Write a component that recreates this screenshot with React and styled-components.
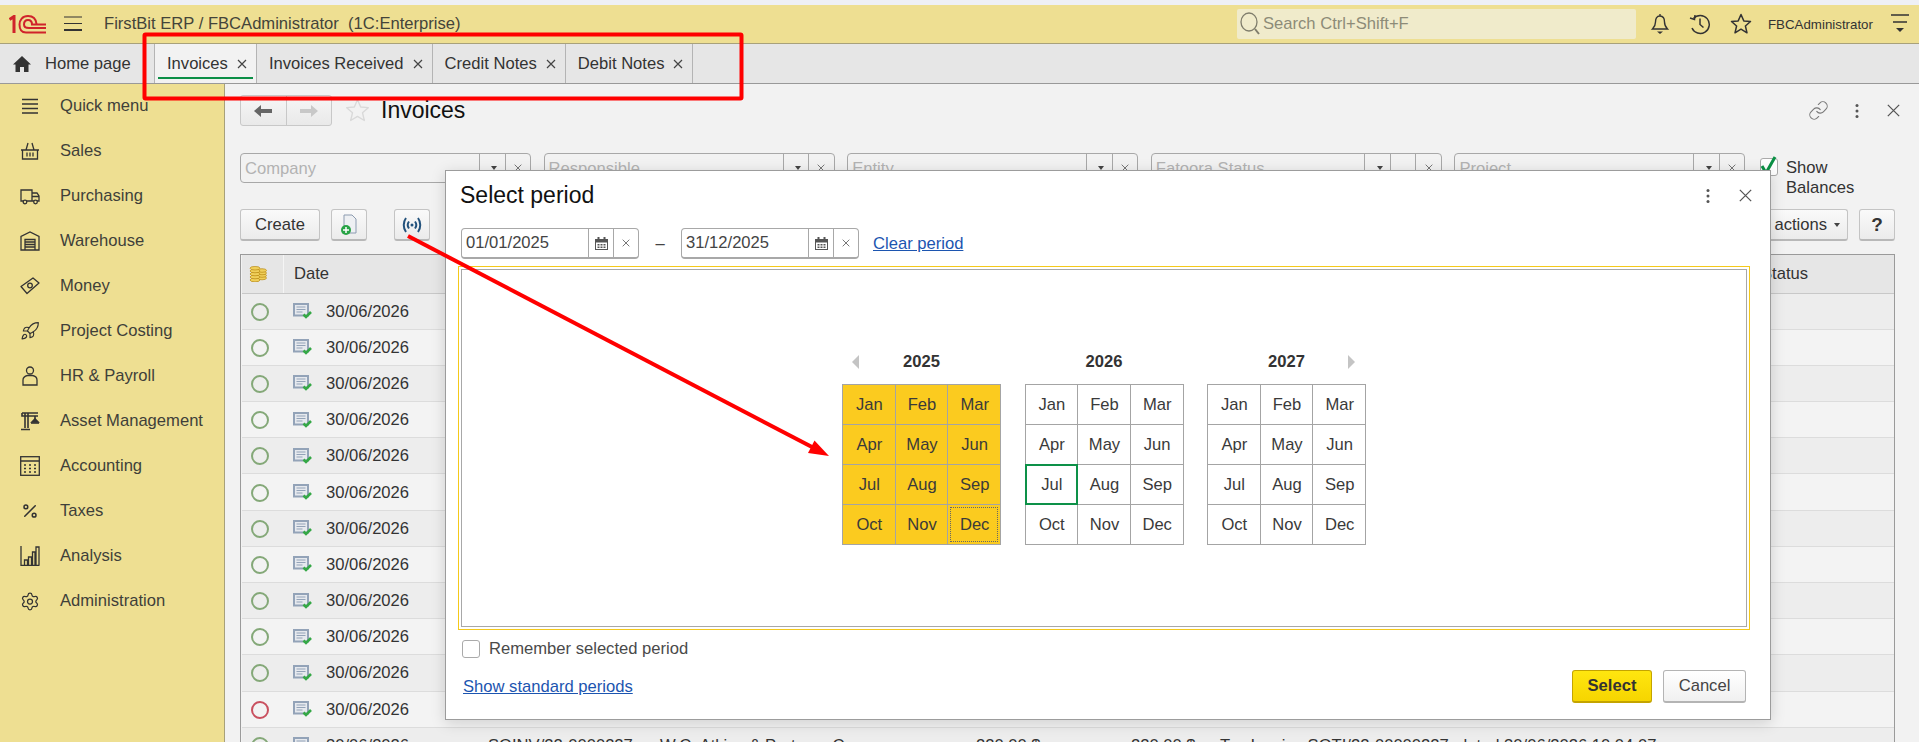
import React from "react";
import styled, { createGlobalStyle } from "styled-components";
import { Rocket, Settings, Percent, Link as ChainLink } from "lucide-react";

const MONTHS = ["Jan", "Feb", "Mar", "Apr", "May", "Jun", "Jul", "Aug", "Sep", "Oct", "Nov", "Dec"];
const ROWS = Array.from({ length: 13 }, (_, i) => i);

function Line({ size = 12, color = "#555", weight = 1.2 }) {
  return (
    <svg width={size} height={size} viewBox="0 0 12 12" fill="none" stroke={color} strokeWidth={weight}>
      <path d="M2 2l8 8M10 2l-8 8" />
    </svg>
  );
}

function Dots() {
  return (
    <svg width="4" height="16" viewBox="0 0 4 16" fill="#555">
      <rect x="0.5" y="1" width="3" height="3" rx="1.5" />
      <rect x="0.5" y="6.5" width="3" height="3" rx="1.5" />
      <rect x="0.5" y="12" width="3" height="3" rx="1.5" />
    </svg>
  );
}

function Logo() {
  return (
    <svg width="38" height="19" viewBox="0 0 38 19" fill="none" stroke="#d0232b" strokeWidth="2">
      <path d="M0.5 4.5L5 1.5V18" strokeWidth="3" />
      <path d="M37 17.5H17C12.5 17.5 10.5 14 10.5 9.5S13.5 1 19 1S27 4 27.5 9" />
      <path d="M37 13H20C17 13 15 12 15 9.5S16.500 5 19 5S23 7 23 9.500H37" />
    </svg>
  );
}

function Menu({ arrow }) {
  return (
    <svg width="20" height="24" viewBox="0 0 20 24" fill="none" stroke="#333" strokeWidth="1.4">
      <path d="M1 3h18M3 10h14" />
      {arrow ? <path d="M6 16h8l-4 4z" fill="#333" stroke="none" /> : null}
    </svg>
  );
}

function Burger() {
  return (
    <svg width="18" height="16" viewBox="0 0 18 16" fill="none" stroke="#333">
      <path d="M0 1h18M0 7.500h18" strokeWidth="1.2" />
      <path d="M0 14h18" strokeWidth="2" />
    </svg>
  );
}

function Bell() {
  return (
    <svg width="20" height="22" viewBox="0 0 20 22" fill="none" stroke="#333" strokeWidth="1.4">
      <path d="M10 1v2M10 3c-3.500 0-4.500 3-4.500 6 0 4-1.500 5.500-3 7h15c-1.500-1.500-3-3-3-7 0-3-1-6-4.500-6z" />
      <path d="M7 18.500h6L10 21z" fill="#333" stroke="none" />
    </svg>
  );
}

function History() {
  return (
    <svg width="22" height="22" viewBox="0 0 22 22" fill="none" stroke="#333" strokeWidth="1.5">
      <path d="M4.500 5.500A9 9 0 1 1 3 15" />
      <path d="M1 5l4.500 1.500L6 2" />
      <path d="M11 5.500V11.500l3.500 3" />
    </svg>
  );
}

function Star({ size = 22, color = "#333", width = 1.5 }) {
  return (
    <svg width={size} height={size} viewBox="0 0 22 22" fill="none" stroke={color} strokeWidth={width}>
      <path d="M11 1.500l2.800 6.400 6.700.6-5.100 4.500 1.600 6.800L11 16.200l-6 3.600 1.600-6.800L1.500 8.500l6.700-.6z" strokeLinejoin="round" />
    </svg>
  );
}

function Magnifier() {
  return (
    <svg width="22" height="26" viewBox="0 0 22 26" fill="none" stroke="#7f7d6c" strokeWidth="1.3">
      <ellipse cx="10" cy="11" rx="8" ry="9" />
      <path d="M16 18l4 5" strokeWidth="2" />
    </svg>
  );
}

function Home() {
  return (
    <svg width="18" height="16" viewBox="0 0 18 16" fill="#333">
      <path d="M9 0L18 8.500h-2.500V16H11v-5H7v5H2.500V8.500H0z" />
    </svg>
  );
}

const sideIcon = { width: 20, height: 20, viewBox: "0 0 20 20", fill: "none", stroke: "#333", strokeWidth: 1.3 };

function SideIcon({ name }) {
  switch (name) {
    case "menu":
      return (
        <svg {...sideIcon}>
          <path d="M2 3.500h16M2 8h16M2 12.500h16M2 17h16" />
        </svg>
      );
    case "basket":
      return (
        <svg {...sideIcon}>
          <path d="M1 9h18M2.500 9v9h15V9M6 9l2-7M14 9l-2-7M7 11.500v4M10 11.500v4M13 11.500v4" />
        </svg>
      );
    case "truck":
      return (
        <svg {...sideIcon}>
          <path d="M3 15H1V4h11v11H7M12 7h5l2 3v5h-2M12 15h2M12 10.500h7" />
          <circle cx="5" cy="16" r="1.800" />
          <circle cx="15.500" cy="16" r="1.800" />
        </svg>
      );
    case "warehouse":
      return (
        <svg {...sideIcon}>
          <path d="M1 19V5.500L10 1l9 4.500V19zM5 19V8.500h10V19M5 11h10M5 13.500h10M5 16h10" />
        </svg>
      );
    case "money":
      return (
        <svg {...sideIcon}>
          <path d="M1 10.500L13 2l6 5-12 10.500z" strokeLinejoin="round" />
          <circle cx="10" cy="9.500" r="2.300" />
        </svg>
      );
    case "rocket":
      return <Rocket size={20} color="#333" strokeWidth={1.4} />;
    case "person":
      return (
        <svg {...sideIcon}>
          <circle cx="10" cy="4.500" r="3.500" />
          <path d="M3 19v-5c0-3 2.500-4 4.500-4.500h5C15 10 17 11 17 14v5z" />
        </svg>
      );
    case "crane":
      return (
        <svg {...sideIcon} strokeWidth={1.6}>
          <path d="M2 2h16M5 2v15M8 2v15M1 18.500h9M2 2v3h16M15 5v3" />
          <path d="M12 11l3-3 3 3z" fill="#333" />
          <path d="M11 12h8" />
        </svg>
      );
    case "calc":
      return (
        <svg {...sideIcon}>
          <rect x="0.700" y="0.700" width="18.600" height="18.600" />
          <path d="M1 5h18" strokeWidth="1.500" />
          <path d="M4 9h2M9 9h2M14 9h2M4 12.500h2M9 12.500h2M14 12.500h2M4 16h2M9 16h2M14 16h2" strokeWidth="1.500" />
        </svg>
      );
    case "percent":
      return <Percent size={18} color="#333" strokeWidth={2} />;
    case "bars":
      return (
        <svg {...sideIcon}>
          <path d="M1 0v19.500h18.500M4.500 19v-5h3v5M8.500 19v-8h3v8M12.500 19V6h2.500v13M16 19V1h3v18" />
        </svg>
      );
    default:
      return <Settings size={21} color="#333" strokeWidth={1.5} />;
  }
}

function Coins() {
  return (
    <svg width="18" height="16" viewBox="0 0 18 16" fill="#f0cf5a" stroke="#b98a12" strokeWidth="0.7">
      <ellipse cx="13" cy="12" rx="4.500" ry="1.800" />
      <ellipse cx="13" cy="9.500" rx="4.500" ry="1.800" />
      <ellipse cx="13" cy="7" rx="4.500" ry="1.800" />
      <ellipse cx="13" cy="4.500" rx="4.500" ry="1.800" />
      <ellipse cx="6" cy="14" rx="5" ry="1.800" />
      <ellipse cx="6" cy="11" rx="5" ry="1.800" />
      <ellipse cx="6" cy="8" rx="5" ry="1.800" />
      <ellipse cx="6" cy="5" rx="5" ry="1.800" />
      <ellipse cx="6" cy="2.200" rx="5" ry="1.800" />
    </svg>
  );
}

function DocIcon() {
  return (
    <svg width="20" height="17" viewBox="0 0 20 17" fill="none">
      <rect x="1" y="1" width="14" height="11.500" fill="#e6e9ee" stroke="#93a3b8" strokeWidth="2" />
      <path d="M3.500 4h9M3.500 6.500h9M3.500 9h6" stroke="#93a3b8" />
      <path d="M10.500 11.500l2.500 2.500 5-5" stroke="#35a846" strokeWidth="2.600" />
    </svg>
  );
}

function ToolFileIcon() {
  return (
    <svg width="18" height="22" viewBox="0 0 18 22" fill="none">
      <path d="M4 1h8l4 4v14H4z" fill="#eef0f3" stroke="#8c9bb0" />
      <circle cx="6" cy="16" r="5" fill="#27a345" />
      <path d="M6 13v6M3 16h6" stroke="#fff" strokeWidth="1.500" />
    </svg>
  );
}

function SignalIcon() {
  return (
    <svg width="22" height="18" viewBox="0 0 22 18" fill="none" stroke="#23527c" strokeWidth="2">
      <path d="M5 2C2 6 2 12 5 16M17 2c3 4 3 10 0 14M8 5.500c-1.500 2-1.500 5 0 7M14 5.500c1.500 2 1.500 5 0 7" />
      <circle cx="11" cy="9" r="1.500" fill="#23527c" stroke="none" />
    </svg>
  );
}

function CalIcon() {
  return (
    <svg width="13" height="13" viewBox="0 0 13 13" fill="#555">
      <path d="M0 2h13v11H0zM1 5.500V12h11V5.500z" fillRule="evenodd" />
      <rect x="2.500" y="0" width="2" height="3" />
      <rect x="8.500" y="0" width="2" height="3" />
      <path d="M2.500 7h2v1.500h-2zM5.500 7h2v1.500h-2zM8.500 7h2v1.500h-2zM2.500 9.500h2V11h-2zM5.500 9.500h2V11h-2zM8.500 9.500h2V11h-2z" />
    </svg>
  );
}

function Annotations() {
  return (
    <Overlay width="1919" height="742" viewBox="0 0 1919 742" fill="none">
      <rect x="144.500" y="34.500" width="597" height="64" stroke="#f00" strokeWidth="4" rx="1" />
      <path d="M408 236L812 447" stroke="#f00" strokeWidth="4" />
      <path d="M829 456L808 453L814.500 440.500z" fill="#f00" />
    </Overlay>
  );
}

function Filter({ label, extra }) {
  return (
    <FilterBox>
      <FilterText>{label}</FilterText>
      <FilterCell>
        <DropGlyph />
      </FilterCell>
      {extra ? <FilterCell /> : null}
      <FilterCell>
        <Line size={10} color="#777" />
      </FilterCell>
    </FilterBox>
  );
}

function Year({ year, selected, current, prev, next }) {
  return (
    <YearColumn>
      <YearHead>
        <span>{prev ? <Triangle $dir="left" /> : null}</span>
        <YearLabel>{year}</YearLabel>
        <YearEnd>{next ? <Triangle $dir="right" /> : null}</YearEnd>
      </YearHead>
      <MonthGrid>
        {MONTHS.map((m) => (
          <Month key={m} $selected={selected} $current={current && m === "Jul"} $focused={selected && m === "Dec"}>
            {m}
          </Month>
        ))}
      </MonthGrid>
    </YearColumn>
  );
}

function DateField({ value }) {
  return (
    <DateBox>
      <DateText>{value}</DateText>
      <DateCell>
        <CalIcon />
      </DateCell>
      <DateCell>
        <Line size={10} color="#777" />
      </DateCell>
    </DateBox>
  );
}

const SIDE = [
  ["menu", "Quick menu"],
  ["basket", "Sales"],
  ["truck", "Purchasing"],
  ["warehouse", "Warehouse"],
  ["money", "Money"],
  ["rocket", "Project Costing"],
  ["person", "HR & Payroll"],
  ["crane", "Asset Management"],
  ["calc", "Accounting"],
  ["percent", "Taxes"],
  ["bars", "Analysis"],
  ["gear", "Administration"],
];

const TABS = ["Invoices", "Invoices Received", "Credit Notes", "Debit Notes"];

export default function App() {
  return (
    <Page>
      <GlobalStyle />
      <TopStrip />
      <Header>
        <LogoWrap>
          <Logo />
        </LogoWrap>
        <BurgerWrap>
          <Burger />
        </BurgerWrap>
        <AppTitle>FirstBit ERP / FBCAdministrator  (1C:Enterprise)</AppTitle>
        <Search>
          <Magnifier />
          <span>Search Ctrl+Shift+F</span>
        </Search>
        <HeaderIcons>
          <Bell />
          <History />
          <Star />
        </HeaderIcons>
        <UserName>FBCAdministrator</UserName>
        <Menu arrow />
      </Header>
      <TabBar>
        <HomeTab>
          <Home />
          Home page
        </HomeTab>
        {TABS.map((t, i) => (
          <Tab key={t} $active={i === 0}>
            {t}
            <Line size={12} color="#444" />
          </Tab>
        ))}
      </TabBar>
      <Main>
        <Sidebar>
          {SIDE.map(([icon, label]) => (
            <SideItem key={label}>
              <SideIconBox>
                <SideIcon name={icon} />
              </SideIconBox>
              {label}
            </SideItem>
          ))}
        </Sidebar>
        <Content>
          <TitleRow>
            <NavGroup>
              <NavButton>
                <NavArrow viewBox="0 0 18 12" fill="#666">
                  <path d="M0 6l7-6v4h11v4H7v4z" />
                </NavArrow>
              </NavButton>
              <NavButton>
                <NavArrow viewBox="0 0 18 12" fill="#c8c8c8">
                  <path d="M18 6l-7-6v4H0v4h11v4z" />
                </NavArrow>
              </NavButton>
            </NavGroup>
            <Star size={25} color="#d9d9d9" width={1.2} />
            <PageTitle>Invoices</PageTitle>
            <TitleActions>
              <ChainLink size={21} color="#777" strokeWidth={1.2} />
              <Dots />
              <Line size={17} color="#555" weight={0.9} />
            </TitleActions>
          </TitleRow>
          <FilterRow>
            <Filter label="Company" />
            <Filter label="Responsible" />
            <Filter label="Entity" />
            <Filter label="Fatoora Status" extra />
            <Filter label="Project" />
            <BalanceCheck>
              <CheckBox>
                <svg width="20" height="22" viewBox="0 0 20 22" fill="none" stroke="#0c9146" strokeWidth="3">
                  <path d="M3 11l4 7L16 2" />
                </svg>
              </CheckBox>
              <BalanceLabel>
                Show
                <br />
                Balances
              </BalanceLabel>
            </BalanceCheck>
          </FilterRow>
          <Toolbar>
            <ToolButton $wide>Create</ToolButton>
            <ToolButton>
              <ToolFileIcon />
            </ToolButton>
            <ToolButton $apart>
              <SignalIcon />
            </ToolButton>
            <ToolSpacer />
            <ToolButton $wide>
              More actions
              <DropGlyph />
            </ToolButton>
            <ToolButton>
              <HelpMark>?</HelpMark>
            </ToolButton>
          </Toolbar>
          <Table>
            <HeadRow>
              <HeadCell>
                <Coins />
              </HeadCell>
              <HeadCell $first>Date</HeadCell>
              <HeadCell />
              <HeadCell />
              <HeadCell />
              <HeadCell $last>Status</HeadCell>
            </HeadRow>
            {ROWS.map((i) => (
              <Row key={i}>
                <Cell>
                  <StatusDot $red={i === 11} />
                </Cell>
                <Cell>
                  <DocIcon />
                </Cell>
                <Cell>30/06/2026</Cell>
                {i === 12 ? (
                  <>
                    <Cell>SOINV/22-0000227</Cell>
                    <Cell>W.C. Atkins &amp; Partners Co</Cell>
                    <Cell>220.00 $</Cell>
                    <Cell>220.00 $</Cell>
                    <Cell>Tax Invoice SOTI/22-00000227, dated 30/06/2026 10:04:07</Cell>
                  </>
                ) : null}
              </Row>
            ))}
          </Table>
        </Content>
      </Main>
      <Modal>
        <ModalHead>
          <ModalTitle>Select period</ModalTitle>
          <ModalActions>
            <Dots />
            <Line size={17} color="#555" weight={0.9} />
          </ModalActions>
        </ModalHead>
        <DateRow>
          <DateField value="01/01/2025" />
          <Dash>–</Dash>
          <DateField value="31/12/2025" />
          <ClearLink>Clear period</ClearLink>
        </DateRow>
        <CalendarFrame>
          <Calendar>
            <Year year="2025" selected prev />
            <Year year="2026" current />
            <Year year="2027" next />
          </Calendar>
        </CalendarFrame>
        <RememberRow>
          <CheckBox />
          Remember selected period
        </RememberRow>
        <ModalFoot>
          <ModalLink>Show standard periods</ModalLink>
          <FootButtons>
            <PrimaryButton>Select</PrimaryButton>
            <CancelButton>Cancel</CancelButton>
          </FootButtons>
        </ModalFoot>
      </Modal>
      <Annotations />
    </Page>
  );
}

const GlobalStyle = createGlobalStyle`
  html, body {
    margin: 0;
    padding: 0;
    overflow: hidden;
    background: #f2f2f2;
  }
  * {
    box-sizing: border-box;
  }
`;

const Page = styled.div`
  position: relative;
  width: 1919px;
  height: 742px;
  overflow: hidden;
  display: flex;
  flex-direction: column;
  font-family: "Liberation Sans", Arial, sans-serif;
  font-size: 16.6px;
  color: #333;
`;

const Overlay = styled.svg`
  position: absolute;
  left: 0;
  top: 0;
  pointer-events: none;
`;

const TopStrip = styled.div`
  height: 5px;
  background: #eef0f6;
`;

const Header = styled.header`
  height: 39px;
  flex: none;
  display: flex;
  align-items: center;
  padding-right: 9px;
  background: #eedf92;
  border-bottom: 1px solid #a8a17a;
`;

const LogoWrap = styled.div`
  width: 64px;
  padding-left: 9px;
  display: flex;
`;

const BurgerWrap = styled.div`
  width: 40px;
  display: flex;
`;

const AppTitle = styled.div`
  flex: 1;
  white-space: pre;
  font-size: 16.6px;
  color: #44443a;
`;

const Search = styled.div`
  width: 399px;
  height: 30px;
  display: flex;
  align-items: center;
  gap: 2px;
  padding-left: 2px;
  border-radius: 2px;
  background: #f0ebcb;
  color: #8d8b78;
`;

const HeaderIcons = styled.div`
  width: 132px;
  padding-left: 14px;
  display: flex;
  align-items: center;
  gap: 19px;
`;

const UserName = styled.div`
  width: 122px;
  font-size: 13.3px;
  color: #333;
`;

const TabBar = styled.nav`
  height: 40px;
  flex: none;
  display: flex;
  background: #e6e6e6;
  border-bottom: 1px solid #999;
`;

const HomeTab = styled.div`
  width: 155px;
  display: flex;
  align-items: center;
  gap: 14px;
  padding-left: 13px;
  border-right: 1px solid #b4b4b4;
`;

const Tab = styled.div`
  position: relative;
  display: flex;
  align-items: center;
  gap: 8px;
  padding: 0 8px 0 12px;
  border-right: 1px solid #b4b4b4;
  background: ${(p) => (p.$active ? "#f2f2f2" : "#e6e6e6")};

  &::after {
    content: "";
    display: ${(p) => (p.$active ? "block" : "none")};
    position: absolute;
    left: 3px;
    right: 3px;
    bottom: 4px;
    height: 2px;
    background: #0c8f47;
  }
`;

const Main = styled.div`
  flex: 1;
  display: flex;
  min-height: 0;
`;

const Sidebar = styled.aside`
  width: 225px;
  flex: none;
  background: #eedf92;
  border-right: 1px solid #a8a17a;
`;

const SideItem = styled.div`
  height: 45px;
  display: flex;
  align-items: center;
  gap: 20px;
  padding: 0 0 1px 20px;
  color: #3f3f3a;
`;

const SideIconBox = styled.span`
  width: 20px;
  height: 20px;
  display: flex;
  align-items: center;
  justify-content: center;
`;

const Content = styled.main`
  flex: 1;
  min-width: 0;
  padding: 11px 24px 0 15px;
  background: #f2f2f2;
`;

const TitleRow = styled.div`
  height: 31px;
  display: flex;
  align-items: center;
`;

const NavGroup = styled.div`
  width: 92px;
  height: 31px;
  display: flex;
  margin-right: 13px;
  border: 1px solid #c8c8c8;
  border-radius: 3px;
  background: linear-gradient(#f6f6f6, #e9e9e9);
`;

const NavButton = styled.div`
  flex: 1;
  display: flex;
  align-items: center;
  justify-content: center;

  & + & {
    border-left: 1px solid #c8c8c8;
  }
`;

const NavArrow = styled.svg`
  width: 18px;
  height: 12px;
`;

const PageTitle = styled.h1`
  margin: 0 0 0 11px;
  font-size: 23px;
  font-weight: 400;
  color: #111;
`;

const TitleActions = styled.div`
  margin: 0 -7px 0 auto;
  display: flex;
  align-items: center;
  gap: 26px;
`;

const FilterRow = styled.div`
  display: flex;
  gap: 12.6px;
  margin-top: 27px;
  height: 30px;
`;

const FilterBox = styled.div`
  width: 291px;
  height: 30px;
  flex: none;
  display: flex;
  border: 1px solid #a8a8a8;
  border-radius: 4px;
  color: #b3b3b3;
  background: #f2f2f2;
`;

const FilterText = styled.div`
  flex: 1;
  padding-left: 4px;
  line-height: 30px;
  overflow: hidden;
  white-space: nowrap;
`;

const FilterCell = styled.div`
  width: 25.5px;
  display: flex;
  align-items: center;
  justify-content: center;
  border-left: 1px solid #a8a8a8;
`;

const DropGlyph = styled.span`
  width: 0;
  height: 0;
  margin-left: 4px;
  border-left: 3.5px solid transparent;
  border-right: 3.5px solid transparent;
  border-top: 4px solid #444;
`;

const BalanceCheck = styled.div`
  display: flex;
  gap: 8px;
  margin-left: 2px;
  padding-top: 5px;
  color: #333;
  line-height: 20px;
`;

const BalanceLabel = styled.div`
  white-space: nowrap;
`;

const CheckBox = styled.span`
  position: relative;
  width: 18px;
  height: 18px;
  flex: none;
  display: inline-block;
  border: 1px solid #aaa;
  border-radius: 3px;
  background: #fff;

  svg {
    position: absolute;
    left: -2px;
    top: -4px;
  }
`;

const Toolbar = styled.div`
  display: flex;
  gap: 11px;
  margin-top: 26px;
  height: 33px;
`;

const ToolButton = styled.div`
  min-width: ${(p) => (p.$wide ? "80px" : "36px")};
  height: 32px;
  margin-left: ${(p) => (p.$apart ? "16px" : "0")};
  display: flex;
  align-items: center;
  justify-content: center;
  gap: 3px;
  padding: 0 ${(p) => (p.$wide ? "7px" : "3px")};
  border: 1px solid #c4c4c4;
  border-bottom: 2px solid #b8b8b8;
  border-radius: 3px;
  background: linear-gradient(#fafafa, #ebebeb);
  white-space: nowrap;
`;

const HelpMark = styled.b`
  font-size: 19px;
`;

const ToolSpacer = styled.div`
  flex: 1;
`;

const Table = styled.div`
  margin-top: 12px;
  border-left: 1px solid #9a9a9a;
  border-right: 1px solid #9a9a9a;
  border-top: 1px solid #9a9a9a;
`;

const HeadRow = styled.div`
  height: 38.5px;
  display: grid;
  grid-template-columns: 41px 205px 172px 316px 785px 1fr;
  margin-left: 1px;
  background: #e6e6e6;
  border-bottom: 1px solid #c8c8c8;
`;

const HeadCell = styled.div`
  display: flex;
  align-items: center;
  padding-left: ${(p) => (p.$first ? "10px" : p.$last ? "0" : "7px")};
  border-left: ${(p) => (p.$first ? "1px solid #f5f5f5" : "0")};
`;

const Row = styled.div`
  height: 36.2px;
  display: grid;
  grid-template-columns: 41px 43px 162px 172px 316px 155px 89px 1fr;
  align-items: center;
  margin-left: 1px;
  white-space: nowrap;
  border-bottom: 1px solid #dcdcdc;

  &:nth-child(even) {
    background: #ededed;
  }
  &:nth-child(odd) {
    background: #f3f3f3;
  }
`;

const Cell = styled.div`
  display: flex;
  align-items: center;
  padding-top: 1px;

  &:first-child {
    justify-content: center;
    padding-right: 5px;
  }
  &:nth-child(2) {
    padding-left: 10px;
  }
`;

const StatusDot = styled.span`
  width: 18px;
  height: 18px;
  border-radius: 50%;
  border: 2px solid ${(p) => (p.$red ? "#c9505f" : "#84a878")};
`;

const Modal = styled.section`
  position: absolute;
  left: 445px;
  top: 170px;
  width: 1326px;
  height: 550px;
  display: flex;
  flex-direction: column;
  padding: 0 20px 0 12px;
  background: #fff;
  border: 1px solid #9c9c9c;
  box-shadow: 0 3px 14px rgba(0, 0, 0, 0.15);
`;

const ModalHead = styled.div`
  height: 57px;
  flex: none;
  display: flex;
  align-items: center;
  justify-content: space-between;
  padding: 0 0 8px 2px;
`;

const ModalTitle = styled.h2`
  margin: 0;
  font-size: 23px;
  font-weight: 400;
  color: #111;
`;

const ModalActions = styled.div`
  display: flex;
  align-items: center;
  gap: 27px;
  margin-right: -4px;
`;

const DateRow = styled.div`
  height: 31px;
  flex: none;
  display: flex;
  align-items: center;
  padding-left: 3px;
`;

const DateBox = styled.div`
  width: 178px;
  height: 31px;
  display: flex;
  border: 1px solid #a8a8a8;
  border-bottom-width: 2px;
  border-radius: 4px;
`;

const DateText = styled.div`
  flex: 1;
  padding-left: 4px;
  line-height: 28px;
  color: #444;
`;

const DateCell = styled.div`
  width: 25px;
  display: flex;
  align-items: center;
  justify-content: center;
  border-left: 1px solid #a8a8a8;
`;

const Dash = styled.span`
  width: 42px;
  text-align: center;
  color: #444;
`;

const ModalLink = styled.a`
  color: #1c55b0;
  text-decoration: underline;
`;

const ClearLink = styled(ModalLink)`
  margin-left: 14px;
`;

const CalendarFrame = styled.div`
  height: 364px;
  flex: none;
  margin-top: 7px;
  padding: 2px;
  border: 1px solid #f5c91a;
`;

const Calendar = styled.div`
  height: 100%;
  display: flex;
  align-items: center;
  justify-content: center;
  gap: 23.5px;
  border: 1px solid #a8a8a8;
`;

const YearColumn = styled.div`
  width: 159px;
`;

const YearHead = styled.div`
  height: 20px;
  margin-bottom: 12px;
  display: grid;
  grid-template-columns: 1fr auto 1fr;
  align-items: center;
`;

const YearLabel = styled.div`
  font-weight: 700;
`;

const YearEnd = styled.span`
  display: flex;
  justify-content: flex-end;
`;

const Triangle = styled.i`
  display: block;
  width: 0;
  height: 0;
  margin: 0 ${(p) => (p.$dir === "right" ? "11px" : "0")} 0 ${(p) => (p.$dir === "left" ? "10px" : "0")};
  border-top: 7px solid transparent;
  border-bottom: 7px solid transparent;
  border-right: ${(p) => (p.$dir === "left" ? "7px solid #c4c4c4" : "0")};
  border-left: ${(p) => (p.$dir === "right" ? "7px solid #c4c4c4" : "0")};
`;

const MonthGrid = styled.div`
  display: grid;
  grid-template-columns: repeat(3, 1fr);
  grid-auto-rows: 39px;
  gap: 1px;
  padding: 1px;
  background: #a4a4a4;
`;

const Month = styled.div`
  display: flex;
  align-items: center;
  justify-content: center;
  padding: 1px 0 0 1px;
  background: ${(p) => (p.$selected ? "#fbcb1f" : "#fff")};
  color: #3a3a3a;
  outline: ${(p) => (p.$current ? "2px solid #0d9148" : p.$focused ? "1px dotted #666" : "none")};
  outline-offset: ${(p) => (p.$current ? "-1px" : p.$focused ? "-3px" : "0")};
`;

const RememberRow = styled.label`
  height: 18px;
  flex: none;
  display: flex;
  align-items: center;
  gap: 9px;
  margin-top: 10px;
  padding-left: 4px;
  color: #4a4a4a;
`;

const ModalFoot = styled.div`
  display: flex;
  align-items: center;
  justify-content: space-between;
  margin-top: 12px;
  padding-left: 5px;
`;

const FootButtons = styled.div`
  display: flex;
  gap: 11px;
  padding-right: 4px;
`;

const PrimaryButton = styled.button`
  width: 80px;
  height: 33px;
  border: 1px solid #c4a400;
  border-bottom-width: 2px;
  border-radius: 3px;
  font: 700 16.6px "Liberation Sans", Arial, sans-serif;
  color: #333;
  background: linear-gradient(#ffe60f, #f6d500);
`;

const CancelButton = styled.button`
  width: 83px;
  height: 33px;
  border: 1px solid #b4b4b4;
  border-bottom-width: 2px;
  border-radius: 3px;
  font: 400 16.6px "Liberation Sans", Arial, sans-serif;
  color: #444;
  background: linear-gradient(#fff, #f0f0f0);
`;
